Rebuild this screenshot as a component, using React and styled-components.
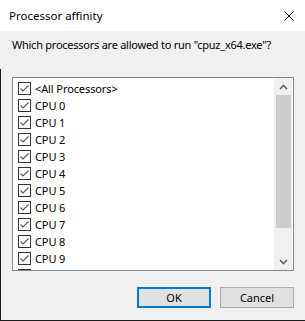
import React from "react"
import styled, { createGlobalStyle } from "styled-components"

const GlobalStyle = createGlobalStyle`
  html, body {
    margin: 0;
    padding: 0;
    background: #f0f0f0;
  }
  body {
    font-family: "Noto Sans", "Open Sans", sans-serif;
    font-size: 11px;
    letter-spacing: -0.1px;
    color: #000;
  }
`

const Window = styled.div`
  width: 305px;
  height: 321px;
  display: flex;
  flex-direction: column;
  box-sizing: border-box;
  overflow: hidden;
`

const TitleBar = styled.header`
  height: 31px;
  flex: none;
  background: #fff;
  display: flex;
  align-items: center;
  justify-content: space-between;
  padding: 0 11px 0 9px;
`

const Title = styled.span`
  font-size: 11.5px;
  line-height: 16px;
  margin-top: 1px;
  letter-spacing: 0;
`

const Body = styled.main`
  flex: 1;
  display: flex;
  flex-direction: column;
  padding: 6px 11px 0 11px;
  background: linear-gradient(#1c1c1c, #1c1c1c) left 38px / 1px 100% no-repeat, #f0f0f0;
  border-bottom: 1px solid #1c1c1c;
`

const Prompt = styled.p`
  margin: 0 0 24px 1px;
  line-height: 16px;
  letter-spacing: -0.25px;
  white-space: nowrap;
`

const ListBox = styled.div`
  height: 194px;
  box-sizing: border-box;
  margin-left: 1px;
  border: 1px solid #828790;
  background: #fff;
  display: flex;
`

const Items = styled.ul`
  flex: 1;
  list-style: none;
  margin: 0;
  padding: 2px 0 0 0;
  overflow: hidden;
`

const Item = styled.li`
  height: 17px;
  display: flex;
  align-items: center;
  padding-left: 5px;
  gap: 4px;
  line-height: 17px;
  white-space: nowrap;
`

const Box = styled.span`
  width: 13px;
  height: 13px;
  box-sizing: border-box;
  border: 1px solid #333;
  background: #fff;
  display: flex;
  align-items: center;
  justify-content: center;
  flex: none;
`

const Scrollbar = styled.div`
  width: 17px;
  flex: none;
  display: flex;
  flex-direction: column;
  border-left: 1px solid #e6eef8;
  margin-right: 1px;
  background: #f0f0f0;
`

const Arrow = styled.div`
  height: 17px;
  flex: none;
  display: flex;
  align-items: center;
  justify-content: center;
`

const Thumb = styled.div`
  height: 133px;
  flex: none;
  background: #cdcdcd;
  margin: 0 1px;
`

const Track = styled.div`
  flex: 1;
`

const Footer = styled.footer`
  display: flex;
  justify-content: flex-end;
  gap: 9px;
  margin-top: 16px;
`

const Button = styled.button`
  width: 74px;
  height: 21px;
  box-sizing: border-box;
  padding: 0;
  font: inherit;
  color: #000;
  background: #e1e1e1;
  border: ${p => (p.$default ? "2px solid #0078d7" : "1px solid #adadad")};
`

const Check = () => (
  <svg width="11" height="11" viewBox="0 0 11 11">
    <path d="M1.5 5.5 L4 8 L9.5 2.5" fill="none" stroke="#555" strokeWidth="1.1" />
  </svg>
)

const Chevron = ({ down }) => (
  <svg width="9" height="6" viewBox="0 0 9 6">
    <path
      d={down ? "M1 1 L4.5 4.5 L8 1" : "M1 5 L4.5 1.5 L8 5"}
      fill="none"
      stroke="#606060"
      strokeWidth="1.6"
    />
  </svg>
)

const rows = ["<All Processors>", ...Array.from({ length: 11 }, (_, i) => `CPU ${i}`)]

export default function App() {
  return (
    <Window>
      <GlobalStyle />
      <TitleBar>
        <Title>Processor affinity</Title>
        <svg width="10" height="10" viewBox="0 0 10 10">
          <path d="M0.5 0.5 L9.5 9.5 M9.5 0.5 L0.5 9.5" stroke="#000" strokeWidth="1" />
        </svg>
      </TitleBar>
      <Body>
        <Prompt>Which processors are allowed to run "cpuz_x64.exe"?</Prompt>
        <ListBox>
          <Items>
            {rows.map(r => (
              <Item key={r}>
                <Box><Check /></Box>
                {r}
              </Item>
            ))}
          </Items>
          <Scrollbar>
            <Arrow><Chevron /></Arrow>
            <Thumb />
            <Track />
            <Arrow><Chevron down /></Arrow>
          </Scrollbar>
        </ListBox>
        <Footer>
          <Button $default>OK</Button>
          <Button>Cancel</Button>
        </Footer>
      </Body>
    </Window>
  )
}
